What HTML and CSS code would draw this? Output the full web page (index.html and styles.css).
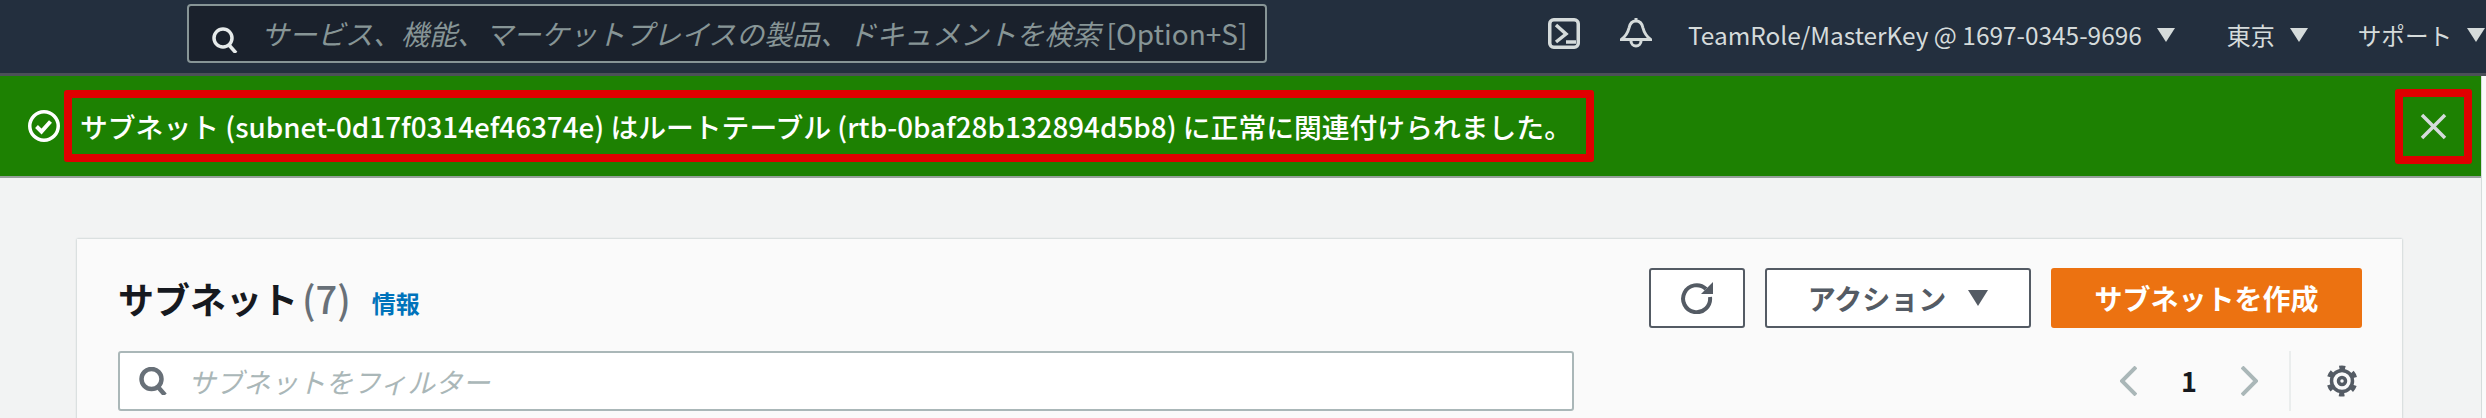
FILE: index.html

```html
<!DOCTYPE html>
<html lang="ja">
<head>
    <meta charset="UTF-8">
    <meta name="viewport" content="width=device-width, initial-scale=1.0">
    <title>サブネット</title>
    <link rel="stylesheet" href="styles.css">
</head>
<body>

<!-- ヘッダー -->
<header class="topbar">
    <div class="search">
        <svg class="search-icon" viewBox="0 0 26 26"><circle cx="11" cy="11" r="9"/><path d="M17 18l7 8"/></svg>
        <span class="search-text">サービス、機能、マーケットプレイスの製品、ドキュメントを検索 <span class="search-key">[Option+S]</span></span>
    </div>
    <svg class="shell-icon" viewBox="0 0 32 31"><rect x="1.75" y="1.75" width="28.5" height="27.5" rx="4"/><path d="M8 7l10 9-10 8M18 24h10"/></svg>
    <svg class="bell-icon" viewBox="0 0 32 31"><path d="M16 0v3M1.5 21.5h29C25 17 24 14 23 10 22 5 19 3 16 3s-6 2-7 7c-1 4-2 7-7.500 11.500zM11 23a5 5 0 0 0 10 0"/></svg>
    <span class="nav-item nav-user">TeamRole/MasterKey @ 1697-0345-9696<i class="caret"></i></span>
    <span class="nav-item nav-region">東京<i class="caret"></i></span>
    <span class="nav-item nav-support">サポート<i class="caret"></i></span>
</header>

<div class="page">
    <!-- 成功メッセージ -->
    <div class="flash">
        <svg class="ok-icon" viewBox="0 0 32 32"><circle cx="16" cy="16" r="14.250"/><path d="M8.500 16.500l5 5 9-10"/></svg>
        <div class="flash-box">サブネット (subnet-0d17f0314ef46374e) はルートテーブル (rtb-0baf28b132894d5b8) に正常に関連付けられました。</div>
        <div class="close-box">
            <svg viewBox="0 0 27 27"><path d="M2 2l23 23M25 2L2 25"/></svg>
        </div>
    </div>

    <!-- サブネット一覧 -->
    <section class="card">
        <div class="card-head">
            <h1 class="title">サブネット<span class="count">(7)</span></h1>
            <a class="info">情報</a>
            <div class="actions">
                <button class="btn btn-icon">
                    <svg viewBox="0 0 32 32"><path d="M25 7A13.500 13.500 0 1 0 29 15"/><path class="solid" d="M32 0v12H20z"/></svg>
                </button>
                <button class="btn btn-actions">アクション<i class="caret"></i></button>
                <button class="btn btn-primary">サブネットを作成</button>
            </div>
        </div>
        <div class="card-tools">
            <div class="filter">
                <svg class="filter-icon" viewBox="0 0 30 28"><circle cx="12.500" cy="12" r="10"/><path d="M19 20l7 8"/></svg>
                <span>サブネットをフィルター</span>
            </div>
            <div class="pager">
                <svg class="chevron" viewBox="0 0 17 30"><path d="M16 1L2 15l14 14"/></svg>
                <span class="page-num">1</span>
                <svg class="chevron" viewBox="0 0 17 30"><path d="M1 1l14 14L1 29"/></svg>
            </div>
            <div class="settings">
                <svg viewBox="0 0 32 32">
                    <circle cx="16" cy="16" r="10.500"/>
                    <circle class="teeth" cx="16" cy="16" r="13.500"/>
                    <circle cx="16" cy="16" r="3.500"/>
                </svg>
            </div>
        </div>
    </section>
</div>

</body>
</html>
```

FILE: styles.css

```css
* { box-sizing: border-box; }

html, body {
    margin: 0;
    height: 418px;
    overflow: hidden;
}

body {
    background: #fafafa;
    font-family: "Noto Sans CJK JP", "Noto Sans", sans-serif;
}

svg { display: block; fill: none; }

.caret {
    display: block;
    width: 0;
    height: 0;
    border-left: 9px solid transparent;
    border-right: 9px solid transparent;
    border-top: 14px solid currentColor;
}

/* ヘッダー */
.topbar {
    height: 76px;
    background: #232f3e;
    border-bottom: 3px solid #4b5058;
    display: flex;
    align-items: center;
    padding: 0 0 7px 187px;
    color: #d5dbdb;
    white-space: nowrap;
    overflow: hidden;
}

.search {
    width: 1080px;
    height: 59px;
    flex: none;
    background: #1a212c;
    border: 2px solid #879596;
    border-radius: 4px;
    display: flex;
    align-items: center;
    padding-left: 23px;
    margin-right: 281px;
}

.search-icon { width: 26px; height: 26px; margin: 14px 23px 0 0; }
.search-icon circle, .search-icon path { stroke: #e6eaea; stroke-width: 3.5; }

.search-text {
    font-size: 28px;
    color: #879596;
    font-style: italic;
}

.search-key { font-style: normal; }

.shell-icon { width: 32px; height: 31px; flex: none; margin-right: 40px; }
.shell-icon rect, .shell-icon path { stroke: #d5dbdb; stroke-width: 3.5; }

.bell-icon { width: 32px; height: 31px; flex: none; margin-right: 36px; }
.bell-icon path { stroke: #d5dbdb; stroke-width: 3; }

.nav-item {
    display: flex;
    align-items: center;
    flex: none;
    font-size: 24px;
    gap: 15px;
    padding-top: 3px;
}

.nav-user { font-size: 24.4px; margin-right: 52px; }
.nav-region { margin-right: 50px; }
.nav-support { font-size: 23.6px; }

/* ページ本体 */
.page {
    width: 2482px;
    height: 342px;
    background: #f2f3f3;
    border-right: 1px solid #d5dbdb;
    overflow: hidden;
}

/* 成功メッセージ */
.flash {
    height: 102px;
    background: #1d8102;
    display: flex;
    align-items: center;
    padding-left: 28px;
    border-bottom: 2px solid #96a09a;
    color: #fff;
}

.ok-icon { width: 32px; height: 32px; margin-right: 4px; }
.ok-icon circle { stroke: #fff; stroke-width: 3.5; }
.ok-icon path { stroke: #fff; stroke-width: 4; }

.flash-box {
    width: 1530px;
    height: 72px;
    border: 8px solid #e00000;
    border-radius: 3px;
    font-size: 27.8px;
    font-weight: 500;
    display: flex;
    align-items: center;
    padding-left: 8px;
    white-space: nowrap;
}

.close-box {
    width: 77px;
    height: 75px;
    border: 8px solid #e00000;
    border-radius: 3px;
    margin-left: auto;
    margin-right: 9px;
    display: flex;
    align-items: center;
    justify-content: center;
}

.close-box svg { width: 27px; height: 27px; }
.close-box path { stroke: #d5dbdb; stroke-width: 3.5; }

/* カード */
.card {
    width: 2325px;
    height: 190px;
    margin: 61px 0 0 77px;
    background: #fafafa;
    box-shadow: 0 0 2px #aab7b8;
    padding: 29px 40px 0 41px;
}

.card-head {
    display: flex;
    align-items: center;
}

.title {
    margin: 0;
    font-size: 36px;
    font-weight: 700;
    color: #16191f;
    line-height: 60px;
}

.count { color: #687078; font-size: 38px; font-weight: 500; margin-left: 4px; }

.info {
    font-size: 24px;
    font-weight: 700;
    color: #0073bb;
    margin: 8px 0 0 21px;
}

.actions {
    margin-left: auto;
    display: flex;
    gap: 20px;
}

.btn {
    height: 60px;
    border-radius: 3px;
    border: 2px solid #545b64;
    background: #fff;
    color: #545b64;
    font-family: inherit;
    font-size: 28px;
    font-weight: 700;
    padding: 0;
    display: flex;
    align-items: center;
    justify-content: center;
}

.btn-icon { width: 96px; }
.btn-icon svg { width: 32px; height: 32px; }
.btn-icon path { stroke: #545b64; stroke-width: 4; }
.btn-icon path.solid { fill: #545b64; stroke: none; }

.btn-actions { width: 266px; gap: 22px; }
.btn-actions .caret {
    border-left-width: 10px;
    border-right-width: 10px;
    border-top-width: 16px;
}

.btn-primary {
    width: 311px;
    background: #ec7211;
    border-color: #ec7211;
    color: #fff;
}

.card-tools {
    display: flex;
    align-items: center;
    margin-top: 23px;
}

.filter {
    width: 1456px;
    height: 60px;
    background: #fff;
    border: 2px solid #aab7b8;
    border-radius: 3px;
    display: flex;
    align-items: center;
    padding-left: 19px;
    color: #aab7b8;
    font-size: 27.5px;
    font-style: italic;
}

.filter-icon { width: 30px; height: 28px; margin-right: 19px; }
.filter-icon circle, .filter-icon path { stroke: #687078; stroke-width: 4.5; }

.pager {
    margin-left: auto;
    display: flex;
    align-items: center;
    gap: 44px;
    padding-right: 31px;
    border-right: 2px solid #eaeded;
    height: 60px;
}

.chevron { width: 17px; height: 30px; }
.chevron path { stroke: #aab7b8; stroke-width: 4; }

.page-num { font-size: 27px; font-weight: 700; color: #16191f; line-height: 30px; }

.settings { padding: 0 4px 0 35px; }
.settings svg { width: 32px; height: 32px; }
.settings circle { stroke: #545b64; stroke-width: 3.5; }
.settings .teeth {
    stroke-width: 4;
    stroke-dasharray: 6 8.14;
    stroke-dashoffset: 3;
    transform: rotate(90deg);
    transform-origin: 16px 16px;
}
```
